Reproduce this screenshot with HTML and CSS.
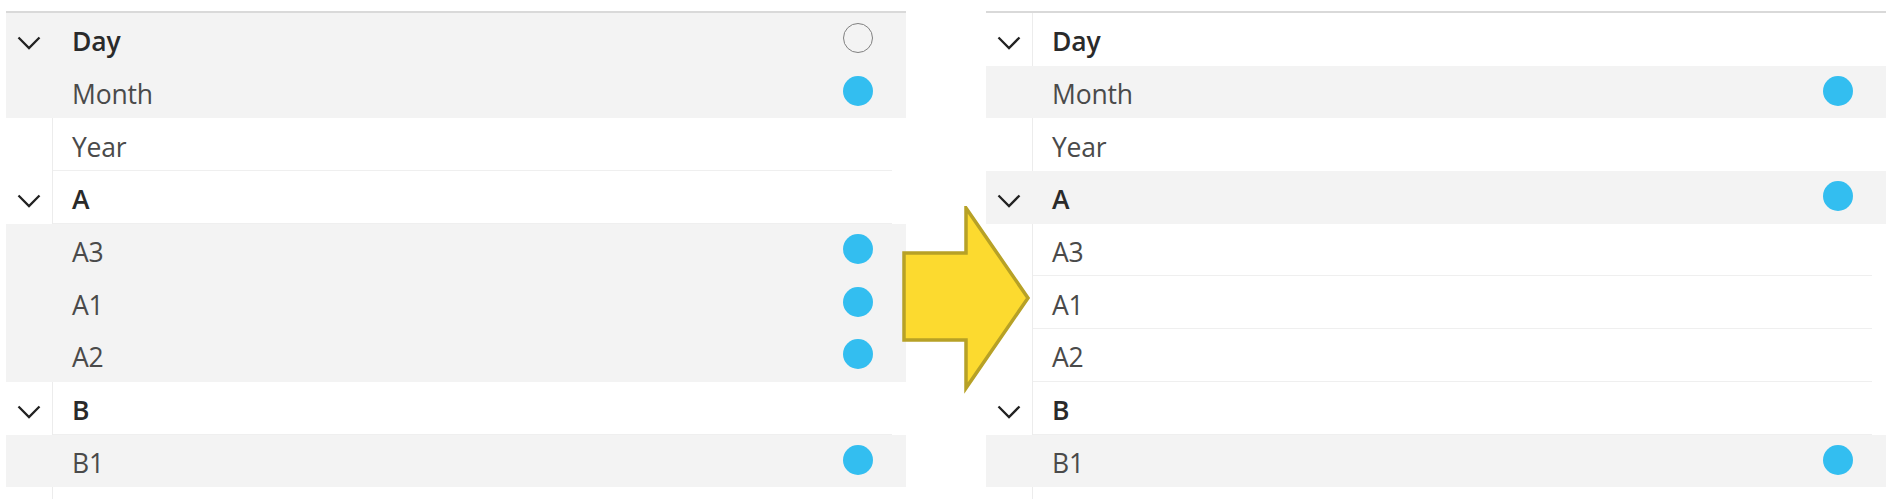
FILE: index.html
```html
<!DOCTYPE html>
<html>
<head>
<meta charset="utf-8">
<link rel="stylesheet" href="styles.css">
</head>
<body>
<div class="stage">
  <div class="panel">
    <div class="row grey head"><div class="chev"><svg viewBox="0 0 24 14" width="24" height="14"><path d="M1.5 1.5 L12 12 L22.5 1.5" fill="none" stroke="#222" stroke-width="2.3"/></svg></div><div class="cell"><span class="label">Day</span><span class="dot ring"></span></div></div>
    <div class="row grey"><div class="chev"></div><div class="cell"><span class="label">Month</span><span class="dot"></span></div></div>
    <div class="row"><div class="chev"></div><div class="cell"><span class="label">Year</span></div></div>
    <div class="row head"><div class="chev"><svg viewBox="0 0 24 14" width="24" height="14"><path d="M1.5 1.5 L12 12 L22.5 1.5" fill="none" stroke="#222" stroke-width="2.3"/></svg></div><div class="cell"><span class="label">A</span></div></div>
    <div class="row grey"><div class="chev"></div><div class="cell"><span class="label">A3</span><span class="dot"></span></div></div>
    <div class="row grey"><div class="chev"></div><div class="cell"><span class="label">A1</span><span class="dot"></span></div></div>
    <div class="row grey"><div class="chev"></div><div class="cell"><span class="label">A2</span><span class="dot"></span></div></div>
    <div class="row head"><div class="chev"><svg viewBox="0 0 24 14" width="24" height="14"><path d="M1.5 1.5 L12 12 L22.5 1.5" fill="none" stroke="#222" stroke-width="2.3"/></svg></div><div class="cell"><span class="label">B</span></div></div>
    <div class="row grey"><div class="chev"></div><div class="cell"><span class="label">B1</span><span class="dot"></span></div></div>
    <div class="row"><div class="chev"></div><div class="cell"></div></div>
  </div>

  <div class="gap"></div>

  <div class="panel">
    <div class="row head"><div class="chev"><svg viewBox="0 0 24 14" width="24" height="14"><path d="M1.5 1.5 L12 12 L22.5 1.5" fill="none" stroke="#222" stroke-width="2.3"/></svg></div><div class="cell nosep"><span class="label">Day</span></div></div>
    <div class="row grey"><div class="chev"></div><div class="cell"><span class="label">Month</span><span class="dot"></span></div></div>
    <div class="row"><div class="chev"></div><div class="cell nosep"><span class="label">Year</span></div></div>
    <div class="row grey head"><div class="chev"><svg viewBox="0 0 24 14" width="24" height="14"><path d="M1.5 1.5 L12 12 L22.5 1.5" fill="none" stroke="#222" stroke-width="2.3"/></svg></div><div class="cell"><span class="label">A</span><span class="dot"></span></div></div>
    <div class="row"><div class="chev"></div><div class="cell"><span class="label">A3</span></div></div>
    <div class="row"><div class="chev"></div><div class="cell"><span class="label">A1</span></div></div>
    <div class="row"><div class="chev"></div><div class="cell"><span class="label">A2</span></div></div>
    <div class="row head"><div class="chev"><svg viewBox="0 0 24 14" width="24" height="14"><path d="M1.5 1.5 L12 12 L22.5 1.5" fill="none" stroke="#222" stroke-width="2.3"/></svg></div><div class="cell"><span class="label">B</span></div></div>
    <div class="row grey"><div class="chev"></div><div class="cell"><span class="label">B1</span><span class="dot"></span></div></div>
    <div class="row"><div class="chev"></div><div class="cell"></div></div>
  </div>

  <svg class="arrow" viewBox="0 0 140 190" width="140" height="190">
    <polygon points="2,47 64,47 64,2 126,92 64,182 64,134 2,134" fill="#fcda2f" stroke="#b7a126" stroke-width="3.5" stroke-linejoin="miter"/>
  </svg>
</div>
</body>
</html>
```

FILE: styles.css
```css
html, body {
  margin: 0;
  padding: 0;
  background: #ffffff;
  overflow: hidden;
}

.stage {
  position: relative;
  display: flex;
  align-items: flex-start;
  padding: 11px 0 0 6px;
  height: 499px;
  box-sizing: border-box;
  overflow: hidden;
  font-family: "Open Sans", "Noto Sans", sans-serif;
}

.panel {
  width: 900px;
  flex: none;
  border-top: 2px solid #d9d9d9;
  display: flex;
  flex-direction: column;
}

.gap {
  width: 80px;
  flex: none;
}

.row {
  height: 52.7px;
  display: flex;
  flex: none;
}

.row.grey {
  background: #f3f3f3;
}

.chev {
  width: 46px;
  flex: none;
  display: flex;
  align-items: center;
  justify-content: center;
  padding-top: 7px;
  box-sizing: border-box;
}

.cell {
  flex: 1;
  display: flex;
  align-items: center;
  border-left: 1px solid #ececec;
  padding-left: 19px;
  padding-right: 33px;
  padding-top: 4px;
  position: relative;
}

.cell::after {
  content: "";
  position: absolute;
  left: 0;
  right: 14px;
  bottom: 0;
  height: 1px;
  background: #efefef;
}

.cell.nosep::after {
  display: none;
}

.row.grey .cell {
  border-left-color: transparent;
}

.row.grey .cell::after {
  display: none;
}

.label {
  flex: 1;
  font-size: 26.5px;
  color: #4a4a4a;
  letter-spacing: -0.2px;
}

.head .label {
  font-weight: 600;
  color: #2a2a2a;
}

.dot {
  width: 30px;
  height: 30px;
  border-radius: 50%;
  background: #33bef0;
  flex: none;
  margin-top: -6px;
}

.dot.ring {
  background: transparent;
  box-sizing: border-box;
  border: 1.5px solid #808080;
}

.arrow {
  position: absolute;
  left: 902px;
  top: 206px;
}
```
